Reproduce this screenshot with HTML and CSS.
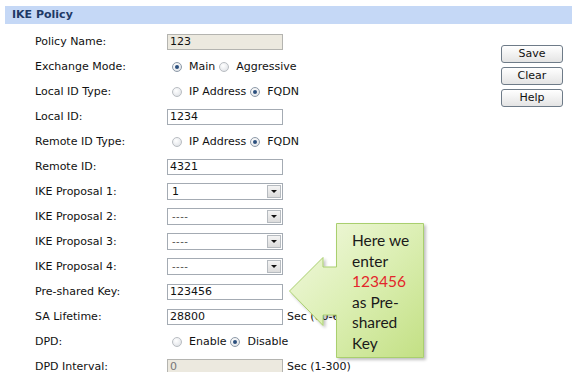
FILE: index.html
```html
<!DOCTYPE html>
<html>
<head>
<meta charset="utf-8">
<link rel="stylesheet" href="styles.css">
</head>
<body>
<div class="panel">
  <div class="titlebar">IKE Policy</div>
  <div class="content">
    <div class="form">
      <div class="label">Policy Name:</div>
      <div class="field"><span class="input disabled">123</span></div>

      <div class="label">Exchange Mode:</div>
      <div class="field"><span class="radio checked"></span><span class="opt">Main</span><span class="radio"></span><span class="opt">Aggressive</span></div>

      <div class="label">Local ID Type:</div>
      <div class="field"><span class="radio"></span><span class="opt">IP Address</span><span class="radio checked"></span><span class="opt">FQDN</span></div>

      <div class="label">Local ID:</div>
      <div class="field"><span class="input">1234</span></div>

      <div class="label">Remote ID Type:</div>
      <div class="field"><span class="radio"></span><span class="opt">IP Address</span><span class="radio checked"></span><span class="opt">FQDN</span></div>

      <div class="label">Remote ID:</div>
      <div class="field"><span class="input">4321</span></div>

      <div class="label">IKE Proposal 1:</div>
      <div class="field"><span class="select"><span class="sel-text">1</span><span class="sel-btn"></span></span></div>

      <div class="label">IKE Proposal 2:</div>
      <div class="field"><span class="select"><span class="sel-text dash">----</span><span class="sel-btn"></span></span></div>

      <div class="label">IKE Proposal 3:</div>
      <div class="field"><span class="select"><span class="sel-text dash">----</span><span class="sel-btn"></span></span></div>

      <div class="label">IKE Proposal 4:</div>
      <div class="field"><span class="select"><span class="sel-text dash">----</span><span class="sel-btn"></span></span></div>

      <div class="label">Pre-shared Key:</div>
      <div class="field"><span class="input">123456</span></div>

      <div class="label">SA Lifetime:</div>
      <div class="field"><span class="input">28800</span><span class="unit">Sec (60-604800)</span></div>

      <div class="label">DPD:</div>
      <div class="field"><span class="radio"></span><span class="opt">Enable</span><span class="radio checked"></span><span class="opt">Disable</span></div>

      <div class="label">DPD Interval:</div>
      <div class="field"><span class="input disabled grey">0</span><span class="unit">Sec (1-300)</span></div>
    </div>
    <div class="buttons">
      <span class="btn">Save</span>
      <span class="btn">Clear</span>
      <span class="btn">Help</span>
    </div>
  </div>
</div>

<div class="callout">
  <svg class="callout-shape" width="150" height="150" viewBox="285 218 150 150" xmlns="http://www.w3.org/2000/svg">
    <defs>
      <linearGradient id="g" x1="0" y1="0" x2="1" y2="1">
        <stop offset="0" stop-color="#f3f9e2"/>
        <stop offset="0.5" stop-color="#dcefb4"/>
        <stop offset="1" stop-color="#c3e084"/>
      </linearGradient>
      <filter id="sh" x="-10%" y="-10%" width="130%" height="130%">
        <feGaussianBlur in="SourceAlpha" stdDeviation="1.5"/>
        <feOffset dx="1.5" dy="2" result="b"/>
        <feComponentTransfer><feFuncA type="linear" slope="0.25"/></feComponentTransfer>
        <feMerge><feMergeNode/><feMergeNode in="SourceGraphic"/></feMerge>
      </filter>
    </defs>
    <path filter="url(#sh)" d="M289.5 291 L323 257.5 L323 267 L336.5 267 L336.5 223.5 L423.5 223.5 L423.5 357.5 L336.5 357.5 L336.5 315 L323 315 L323 325.5 Z" fill="url(#g)" stroke="#a9cf6e" stroke-width="1"/>
  </svg>
  <div class="callout-text">Here we<br>enter<br><span class="red">123456</span><br>as Pre-<br>shared<br>Key</div>
</div>
</body>
</html>
```

FILE: styles.css
```css
html, body {
  margin: 0;
  padding: 0;
  background: #ffffff;
}
body {
  font-family: "DejaVu Sans", Verdana, sans-serif;
  font-size: 11px;
  color: #111;
  width: 576px;
  height: 372px;
  overflow: hidden;
  position: relative;
}
.panel {
  padding: 6px 4px 0 5px;
}
.titlebar {
  height: 18px;
  line-height: 18px;
  background: #c5d8f6;
  color: #1f3a66;
  font-weight: bold;
  padding-left: 7px;
}
.content {
  display: flex;
  padding-top: 5px;
}
.form {
  margin-left: 30px;
  display: grid;
  grid-template-columns: 132px auto;
  grid-auto-rows: 25px;
  align-items: center;
}
.label {
  white-space: nowrap;
}
.field {
  display: flex;
  align-items: center;
  white-space: nowrap;
}
.input {
  box-sizing: border-box;
  width: 116px;
  height: 16px;
  border: 1px solid #a4abb3;
  background: #fff;
  padding-left: 2px;
  line-height: 14px;
}
.input.disabled {
  background: #ece9df;
  border-color: #b4b4b0;
}
.input.grey {
  color: #777;
}
.unit {
  margin-left: 4px;
}
.radio {
  box-sizing: border-box;
  width: 10px;
  height: 10px;
  border-radius: 50%;
  border: 1px solid #b9bdc2;
  background: radial-gradient(circle at 40% 35%, #ffffff 0, #e9ebee 60%, #d5d9de 100%);
  margin-left: 5px;
  margin-right: 7px;
  position: relative;
}
.opt + .radio {
  margin-left: 4px;
}
.radio.checked {
  border-color: #8d9aa8;
}
.radio.checked::after {
  content: "";
  position: absolute;
  left: 2px;
  top: 2px;
  width: 4px;
  height: 4px;
  border-radius: 50%;
  background: #2b4f7d;
}
.select {
  box-sizing: border-box;
  width: 116px;
  height: 17px;
  border: 1px solid #a4abb3;
  background: #fff;
  display: flex;
  align-items: center;
  justify-content: space-between;
  padding: 0 1px 0 4px;
}
.sel-text {
  line-height: 14px;
}
.sel-text.dash {
  color: #555;
  font-size: 10px;
  letter-spacing: 0.5px;
}
.sel-btn {
  box-sizing: border-box;
  width: 14px;
  height: 13px;
  border: 1px solid #b6bbc0;
  background: linear-gradient(#f4f4f4, #dcdcdc);
  position: relative;
}
.sel-btn::after {
  content: "";
  position: absolute;
  left: 3px;
  top: 4px;
  border-left: 3px solid transparent;
  border-right: 3px solid transparent;
  border-top: 3px solid #111;
}
.buttons {
  margin-left: auto;
  margin-right: 9px;
  margin-top: 16px;
  display: flex;
  flex-direction: column;
  gap: 4px;
}
.btn {
  box-sizing: border-box;
  width: 62px;
  height: 18px;
  line-height: 16px;
  text-align: center;
  border: 1px solid #6e7b88;
  border-radius: 3px;
  background: linear-gradient(#ffffff, #e4e4e4);
  color: #111;
}
.callout {
  position: absolute;
  left: 285px;
  top: 218px;
  width: 150px;
  height: 150px;
}
.callout-shape {
  position: absolute;
  left: 0;
  top: 0;
}
.callout-text {
  position: absolute;
  left: 67px;
  top: 12px;
  font-family: Lato, "Open Sans", sans-serif;
  font-size: 15.5px;
  line-height: 20.5px;
  color: #1a1a1a;
}
.red {
  color: #e3262b;
}
```
